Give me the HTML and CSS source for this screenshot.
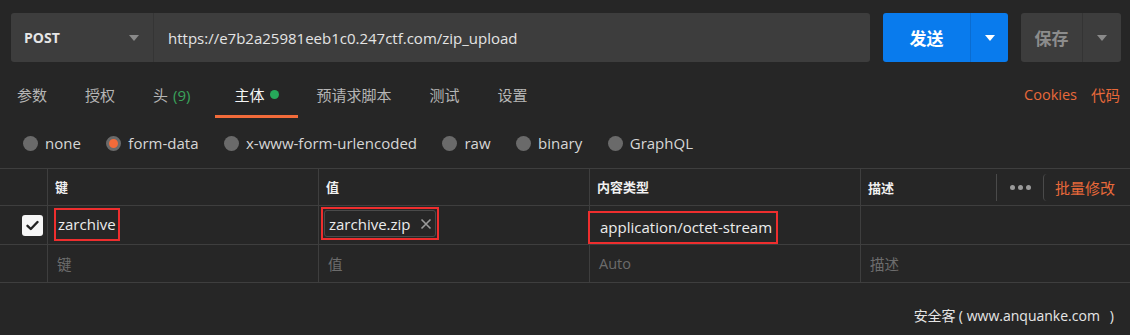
FILE: index.html
```html
<!DOCTYPE html>
<html lang="zh">
<head>
<meta charset="utf-8">
<link rel="stylesheet" href="styles.css">
</head>
<body>
<div class="page">
  <div class="top-bar">
    <div class="url-group">
      <div class="method"><span>POST</span><span class="caret grey"></span></div>
      <div class="url">https://e7b2a25981eeb1c0.247ctf.com/zip_upload</div>
    </div>
    <div class="send">
      <div class="send-main">发送</div>
      <div class="send-arrow"><span class="caret white"></span></div>
    </div>
    <div class="save">
      <div class="save-main">保存</div>
      <div class="save-arrow"><span class="caret grey"></span></div>
    </div>
  </div>

  <div class="tabs-row">
    <div class="tabs">
      <div class="tab">参数</div>
      <div class="tab">授权</div>
      <div class="tab headers">头 <span class="count">(9)</span></div>
      <div class="tab active">主体 <span class="dot"></span></div>
      <div class="tab">预请求脚本</div>
      <div class="tab">测试</div>
      <div class="tab">设置</div>
    </div>
    <div class="tab-links">
      <span>Cookies</span>
      <span>代码</span>
    </div>
  </div>

  <div class="radios">
    <div class="radio"><span class="circle"></span>none</div>
    <div class="radio"><span class="circle on"></span>form-data</div>
    <div class="radio"><span class="circle"></span>x-www-form-urlencoded</div>
    <div class="radio"><span class="circle"></span>raw</div>
    <div class="radio"><span class="circle"></span>binary</div>
    <div class="radio"><span class="circle"></span>GraphQL</div>
  </div>

  <div class="table">
    <div class="cell head"></div>
    <div class="cell head">键</div>
    <div class="cell head">值</div>
    <div class="cell head">内容类型</div>
    <div class="cell head last">
      <span>描述</span>
      <div class="head-tools">
        <span class="vsep"></span>
        <span class="dots"><i></i><i></i><i></i></span>
        <span class="vsep curve"></span>
        <span class="bulk">批量修改</span>
      </div>
    </div>

    <div class="cell row check-cell">
      <span class="checkbox">
        <svg width="13" height="11" viewBox="0 0 13 11"><path d="M1.5 5.8 L4.8 9 L11.5 2" fill="none" stroke="#222" stroke-width="2.4" stroke-linecap="round" stroke-linejoin="round"/></svg>
      </span>
    </div>
    <div class="cell row"><span class="mark key-mark">zarchive</span></div>
    <div class="cell row"><span class="mark val-mark"><span class="chip">zarchive.zip<svg class="x" width="12" height="12" viewBox="0 0 12 12"><path d="M1.5 1.5 L10.5 10.5 M10.5 1.5 L1.5 10.5" stroke="#9a9a9a" stroke-width="1.6"/></svg></span></span></div>
    <div class="cell row"><span class="mark type-mark">application/octet-stream</span></div>
    <div class="cell row last"></div>

    <div class="cell row ph"></div>
    <div class="cell row ph">键</div>
    <div class="cell row ph">值</div>
    <div class="cell row ph">Auto</div>
    <div class="cell row ph last">描述</div>
  </div>

  <div class="footer"><span>安全客</span><span class="paren-open">(</span><span class="site">www.anquanke.com</span><span class="paren-close">)</span></div>
</div>
</body>
</html>
```

FILE: styles.css
```css
* { box-sizing: border-box; }
html, body {
  margin: 0;
  padding: 0;
  background: #262626;
}
body {
  font-family: "Open Sans", "Noto Sans CJK SC", sans-serif;
  color: #e2e2e2;
  width: 1130px;
  height: 335px;
  overflow: hidden;
}
.page { width: 1130px; }

/* top bar */
.top-bar {
  display: flex;
  padding: 13px 9px 0 11px;
  height: 62px;
}
.url-group {
  flex: 1;
  display: flex;
  height: 49px;
  background: #3d3d3d;
  border-radius: 3px;
}
.method {
  width: 143px;
  display: flex;
  align-items: center;
  justify-content: space-between;
  padding: 0 14px 0 13px;
  font-size: 14px;
  font-weight: 700;
  color: #e6e6e6;
  border-right: 1px solid #353535;
}
.url {
  display: flex;
  align-items: center;
  padding-left: 14px;
  font-size: 15px;
  color: #e4e4e4;
}
.caret {
  display: inline-block;
  width: 0;
  height: 0;
  border-left: 5px solid transparent;
  border-right: 5px solid transparent;
  border-top: 6px solid #8a8a8a;
}
.caret.white { border-top-color: #fff; }

.send {
  margin-left: 13px;
  width: 125px;
  height: 49px;
  display: flex;
  background: #097bed;
  border-radius: 3px;
}
.send-main {
  width: 88px;
  display: flex;
  align-items: center;
  justify-content: center;
  font-size: 17px;
  font-weight: 700;
  color: #fff;
  border-right: 1px solid #0a6cd0;
}
.send-arrow, .save-arrow {
  flex: 1;
  display: flex;
  align-items: center;
  justify-content: center;
}
.save {
  margin-left: 13px;
  width: 100px;
  height: 49px;
  display: flex;
  background: #3d3d3d;
  border-radius: 3px;
}
.save-main {
  width: 62px;
  display: flex;
  align-items: center;
  justify-content: center;
  font-size: 17px;
  font-weight: 700;
  color: #8c8c8c;
  border-right: 1px solid #343434;
}

/* tabs */
.tabs-row {
  display: flex;
  justify-content: space-between;
  height: 56px;
  padding-right: 10px;
}
.tabs {
  display: flex;
  margin-left: -2px;
}
.tab {
  padding: 12px 19px 0;
  height: 56px;
  display: flex;
  align-items: center;
  font-size: 15px;
  color: #b5b5b5;
  border-bottom: 3px solid transparent;
}
.tab.headers { margin-right: 6px; }
.tab.active {
  color: #f4f4f4;
  border-bottom-color: #f26b3a;
}
.count { color: #3aa35b; margin-left: 5px; }
.dot {
  display: inline-block;
  width: 9px;
  height: 9px;
  border-radius: 50%;
  background: #26a85a;
  margin-left: 5px;
}
.tab-links {
  display: flex;
  align-items: center;
  gap: 14px;
  padding-top: 9px;
  font-size: 14.5px;
  color: #e8693a;
}

/* radios */
.radios {
  display: flex;
  align-items: center;
  height: 50px;
  padding-left: 23px;
  gap: 25.5px;
  font-size: 15px;
  color: #d6d6d6;
}
.radio {
  display: flex;
  align-items: center;
  gap: 7px;
}
.circle {
  width: 15px;
  height: 15px;
  border-radius: 50%;
  background: #6a6a6a;
  display: inline-block;
}
.circle.on {
  background: #f26b3a;
  border: 3px solid #6a6a6a;
}

/* table */
.table {
  display: grid;
  grid-template-columns: 48px 271px 271px 271px 1fr;
  grid-template-rows: 37px 39px 38px;
  border-top: 1px solid #3e3e3e;
}
.cell {
  border-bottom: 1px solid #3e3e3e;
  border-right: 1px solid #3e3e3e;
  display: flex;
  align-items: center;
  padding-left: 7px;
}
.cell.last { border-right: none; }
.head {
  font-size: 13px;
  font-weight: 700;
  color: #f0f0f0;
  padding-bottom: 2px;
}
.head.last {
  justify-content: space-between;
  padding-right: 15px;
  padding-bottom: 0;
}
.head-tools {
  display: flex;
  align-items: center;
  height: 100%;
}
.vsep {
  width: 1px;
  height: 27px;
  background: #4a4a4a;
}
.vsep.curve {
  width: 4px;
  height: 27px;
  background: none;
  border-left: 1px solid #4a4a4a;
  border-radius: 4px 0 0 4px;
  margin-left: 12px;
}
.dots {
  display: flex;
  gap: 3px;
  margin-left: 13px;
}
.dots i {
  width: 5px;
  height: 5px;
  border-radius: 50%;
  background: #9a9a9a;
}
.bulk {
  font-size: 15px;
  font-weight: 400;
  color: #e8693a;
  margin-left: 8px;
}
.row {
  font-size: 15px;
  color: #ececec;
}
.check-cell { padding-left: 22px; }
.checkbox {
  width: 21px;
  height: 21px;
  border-radius: 3px;
  background: #f6f6f6;
  display: flex;
  align-items: center;
  justify-content: center;
}
.mark {
  border: 2px solid #ee2e2e;
  display: inline-flex;
  align-items: center;
}
.key-mark {
  height: 33px;
  padding: 0 2px;
  margin-left: -1px;
  margin-top: -2px;
}
.val-mark {
  height: 33px;
  padding: 1px;
  margin-left: -5px;
  margin-top: -3px;
}
.chip {
  height: 27px;
  display: inline-flex;
  align-items: center;
  padding: 0 3px 0 4px;
  border: 1px solid #4a4a4a;
  border-radius: 3px;
}
.chip .x { margin-left: 9px; }
.type-mark {
  height: 33px;
  padding: 0 4px 2px 10px;
  margin-left: -9px;
  margin-top: 5px;
  position: relative;
  z-index: 1;
}
.ph { color: #6c6c6c; font-size: 14.5px; padding-left: 9px; }

.footer {
  display: flex;
  justify-content: flex-end;
  align-items: baseline;
  padding-right: 16px;
  padding-top: 22px;
  font-size: 14px;
  color: #e6e6e6;
}
.paren-open { margin-left: 3px; margin-right: 4px; }
.paren-close { margin-left: 10px; }
```
